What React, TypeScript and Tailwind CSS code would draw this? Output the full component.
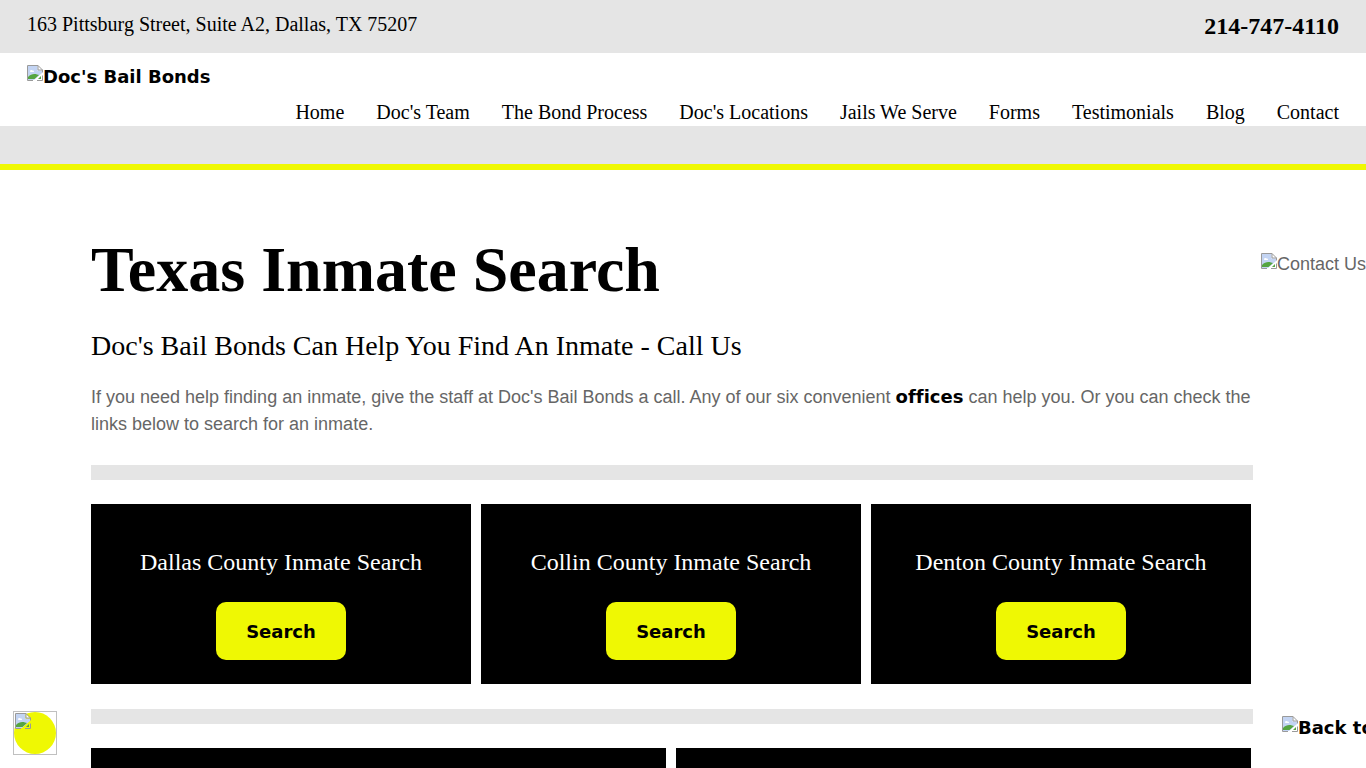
const navLinks = [
  "Home",
  "Doc's Team",
  "The Bond Process",
  "Doc's Locations",
  "Jails We Serve",
  "Forms",
  "Testimonials",
  "Blog",
  "Contact",
];

const counties = ["Dallas County", "Collin County", "Denton County"];

const ImageIcon = () => {
  return (
    <svg width="16" height="16" viewBox="0 0 16 16" className="shrink-0" aria-hidden="true">
      <path d="M1 1H10.5V5.5H15V8L7 15H1Z" fill="#c3d4f3" />
      <path d="M3 6.5C3 5 5 4.6 5.5 5.6C7 5 7.6 7 6.5 7H3.5Z" fill="#fff" />
      <path d="M1 14V12C4 9 7 8.5 10 9.5L12 10L7.5 14Z" fill="#55a541" />
      <path d="M11 14L14 11V14Z" fill="#55a541" />
      <path d="M11 1V5H15Z" fill="#fff" />
      <path
        d="M6 15.5H0.5V0.5H11L15.5 5V7.5M11 0.5V5H15.5M15.5 10.5V15.5H10"
        fill="none"
        stroke="#9a9a9a"
      />
    </svg>
  );
};

const Header = () => {
  return (
    <header className="font-['Liberation_Serif',serif] text-black">
      <div className="flex h-[53px] items-center justify-between bg-[#e5e5e5] px-[27px] pb-0.5">
        <address className="pb-1 text-[20px] leading-6 not-italic">
          163 Pittsburg Street, Suite A2, Dallas, TX 75207
        </address>
        <a href="#phone" className="text-2xl font-bold">
          214-747-4110
        </a>
      </div>
      <div className="px-[27px] pt-3">
        <a
          href="#home"
          className="flex h-6 w-fit font-['DejaVu_Sans',sans-serif] text-lg leading-6 font-bold"
        >
          <ImageIcon />
          Doc's Bail Bonds
        </a>
        <nav className="flex justify-end gap-8 pt-3 pb-0.5 text-[20px] leading-[23px]">
          {navLinks.map((link) => (
            <a key={link} href="#nav" className="whitespace-nowrap">
              {link}
            </a>
          ))}
        </nav>
      </div>
      <div className="h-11 border-b-6 border-[#eff803] bg-[#e5e5e5]" />
    </header>
  );
};

const CountyCard = ({ name }: { name: string }) => {
  return (
    <div className="flex h-[180px] flex-col items-center bg-black pt-10">
      <h3 className="font-['Liberation_Serif',serif] text-2xl leading-9 text-white">
        {name} Inmate Search
      </h3>
      <a
        href="#search"
        className="mt-[22px] rounded-[10px] bg-[#eff803] px-[30px] pt-[17px] pb-[15px] font-['DejaVu_Sans',sans-serif] text-lg leading-[26px] font-bold text-black"
      >
        Search
      </a>
    </div>
  );
};

export default function App() {
  return (
    <div className="relative h-screen overflow-hidden bg-white font-['Liberation_Sans',sans-serif] text-lg text-[#666]">
      <Header />
      <main className="pt-16 pr-[113px] pl-[91px]">
        <h1 className="font-['Liberation_Serif',serif] text-[64px] leading-[72px] font-bold text-black">
          Texas Inmate Search
        </h1>
        <h2 className="pt-5 font-['Liberation_Serif',serif] text-[28px] leading-10 text-black">
          Doc's Bail Bonds Can Help You Find An Inmate - Call Us
        </h2>
        <p className="pt-[17px] leading-[27px]">
          If you need help finding an inmate, give the staff at Doc's Bail Bonds a call. Any of our
          six convenient{" "}
          <a
            href="#offices"
            className="font-['DejaVu_Sans',sans-serif] font-bold text-black [font-variant-ligatures:none]"
          >
            offices
          </a>{" "}
          can help you. Or you can check the links below to search for an inmate.
        </p>
        <hr className="mt-[27px] h-[15px] border-0 bg-[#e5e5e5]" />
        <div className="mt-6 mr-0.5 grid grid-cols-3 gap-2.5">
          {counties.map((county) => (
            <CountyCard key={county} name={county} />
          ))}
        </div>
        <hr className="mt-[25px] h-[15px] border-0 bg-[#e5e5e5]" />
        <div className="mt-6 mr-0.5 grid grid-cols-2 gap-2.5">
          <div className="h-[180px] bg-black" />
          <div className="h-[180px] bg-black" />
        </div>
      </main>

      <a href="#contact" className="absolute top-[253px] right-0 flex leading-[22px]">
        <ImageIcon />
        Contact Us
      </a>
      <button
        aria-label="Accessibility"
        className="absolute bottom-[13px] left-[13px] h-11 w-11 border border-[#c0c0c0] bg-white"
      >
        <span className="block h-full w-full rounded-full bg-[#eff803] pt-px pl-px">
          <ImageIcon />
        </span>
      </button>
      <a
        href="#top"
        className="absolute right-0 bottom-7 flex w-21 overflow-hidden font-['DejaVu_Sans',sans-serif] leading-6 font-bold whitespace-nowrap text-black"
      >
        <ImageIcon />
        Back to Top
      </a>
    </div>
  );
}
